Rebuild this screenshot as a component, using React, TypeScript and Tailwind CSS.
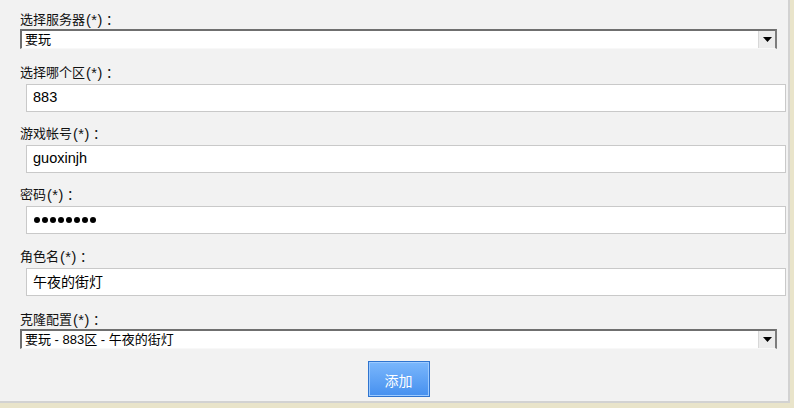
import React from "react";

const font = { fontFamily: '"Liberation Sans", Arial, "Noto Sans CJK SC", sans-serif' };
const jp = { fontFamily: '"Noto Sans CJK JP", "Noto Sans CJK SC", sans-serif' };

function Label({ name, className = "" }: { name: string; className?: string }) {
  return (
    <div className={`h-[18px] leading-[18px] text-[13px] text-[#111] flex items-center ${className}`}>
      <span>{name}</span>
      <span className="text-[14.5px] tracking-[0.5px] pl-[1px]">(*)</span>
      <span style={jp} className="inline-block w-[13px] text-center">：</span>
    </div>
  );
}

function Select({ value, className = "" }: { value: string; className?: string }) {
  return (
    <div
      className={`w-[757px] h-[20px] flex bg-white border-t-2 border-l-2 border-r-2 border-b border-t-[#6f6f6f] border-l-[#6f6f6f] border-r-[#7d7d7d] border-b-[#f8f8f8] ${className}`}
    >
      <div className="flex-1 pl-[3px] text-[13px] leading-[17px] text-black">{value}</div>
      <div className="w-[17px] h-[17px] bg-[#ececec] border-l border-[#d8d8d8] flex items-center justify-center">
        <svg width="9" height="5" viewBox="0 0 9 5">
          <path d="M0 0 H9 L4.5 5 Z" fill="#000" />
        </svg>
      </div>
    </div>
  );
}

function Input({ children, className = "" }: { children: React.ReactNode; className?: string }) {
  return (
    <div
      className={`ml-[6px] w-[760px] h-[28px] bg-white border border-[#c9c9c9] pl-[6px] flex items-center text-[14.5px] text-black ${className}`}
    >
      {children}
    </div>
  );
}

export default function App() {
  return (
    <div className="w-[794px] h-[408px] bg-[#e9e4ca] overflow-hidden" style={font}>
      <div className="w-[790px] h-[403px] bg-[#f2f2f2] border-r-2 border-b-2 border-[#d2d2d2] pl-[20px] pt-[11px]">
        <Label name="选择服务器" />
        <Select value="要玩" />

        <Label name="选择哪个区" className="mt-[15px]" />
        <Input className="mt-[2px]">883</Input>

        <Label name="游戏帐号" className="mt-[13px]" />
        <Input className="mt-[2px]">guoxinjh</Input>

        <Label name="密码" className="mt-[13px]" />
        <Input className="mt-[2px]">
          <span className="flex gap-[2px] pl-[1px]">
            {Array.from({ length: 8 }).map((_, i) => (
              <span key={i} className="w-[6px] h-[6px] rounded-full bg-black inline-block" />
            ))}
          </span>
        </Input>

        <Label name="角色名" className="mt-[14px]" />
        <Input className="mt-[2px] text-[14px]">午夜的街灯</Input>

        <Label name="克隆配置" className="mt-[15px]" />
        <Select value="要玩 - 883区 - 午夜的街灯" />

        <div className="w-[757px] flex justify-center mt-[12px]">
          <button className="w-[62px] h-[36px] border border-[#2f74cf] bg-gradient-to-b from-[#7ab7fc] to-[#4690ef] shadow-[inset_0_0_0_1px_#9ccaff] text-white text-[14px] pt-[5px]">
            添加
          </button>
        </div>
      </div>
    </div>
  );
}
